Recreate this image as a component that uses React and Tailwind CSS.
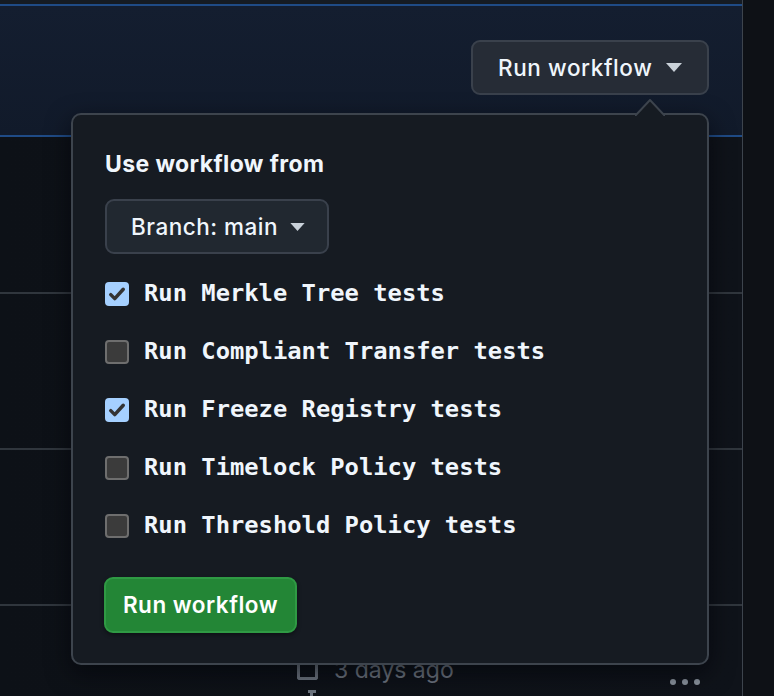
import React from 'react';

const tests = [
  { label: 'Run Merkle Tree tests', checked: true },
  { label: 'Run Compliant Transfer tests', checked: false },
  { label: 'Run Freeze Registry tests', checked: true },
  { label: 'Run Timelock Policy tests', checked: false },
  { label: 'Run Threshold Policy tests', checked: false },
];

const Caret = ({ className }) => (
  <svg viewBox="0 0 16 9" className={className} fill="currentColor">
    <path d="M0 0h16L8 9z" />
  </svg>
);

function Checkbox({ checked }) {
  if (checked) {
    return (
      <span className="w-[24px] h-[24px] rounded-[4px] bg-[#a5d0ff] flex items-center justify-center shrink-0">
        <svg viewBox="0 0 16 16" className="w-[20px] h-[20px]" fill="none" stroke="#333333" strokeWidth="2.8" strokeLinecap="round" strokeLinejoin="round">
          <path d="M3 8.5l3.2 3.2L13 4.2" />
        </svg>
      </span>
    );
  }
  return <span className="w-[24px] h-[24px] rounded-[4px] bg-[#3b3b3b] border-2 border-[#6e6e6e] shrink-0" />;
}

export default function App() {
  return (
    <div className="relative w-[774px] h-[696px] overflow-hidden bg-[#0d1117] flex font-['Inter',sans-serif]">
      {/* main column */}
      <div className="w-[743px] border-r border-[#3d444d] flex flex-col shrink-0">
        <div className="h-[4px] shrink-0 bg-[#151b23]" />
        <div className="h-[133px] shrink-0 border-y-2 border-[#1f4b86] bg-gradient-to-b from-[#141e30] to-[#111a2a] flex justify-end items-start pt-[34px] pr-[33px]">
          <button className="h-[55px] w-[238px] rounded-[9px] bg-[#262c36] border-2 border-[#3a414c] flex items-center pl-[25px] gap-[14px] text-[#f0f6fc] text-[22.5px] font-medium tracking-[0.6px]">
            Run workflow
            <Caret className="w-[16px] h-[9px] text-[#c9d1d9]" />
          </button>
        </div>
        <div className="h-[157px] shrink-0 border-b-2 border-[#30363d] bg-gradient-to-r from-[#0d1117] to-[#0f131a]" />
        <div className="h-[156px] shrink-0 border-b-2 border-[#30363d] bg-gradient-to-r from-[#0d1117] to-[#0f131a]" />
        <div className="h-[156px] shrink-0 border-b-2 border-[#30363d] bg-gradient-to-r from-[#0d1117] to-[#0f131a]" />
        <div className="flex-1 min-h-0 overflow-hidden flex items-start pt-[50px] pl-[297px] pr-[42px] bg-gradient-to-r from-[#0d1117] to-[#0f131a]">
          <div className="flex flex-col items-start">
            <div className="flex items-center gap-[16px] text-[#6e7681] text-[23px] leading-[28px]">
              <span className="w-[21px] h-[20px] border-[3px] border-t-0 border-[#6e7681] rounded-b-[3px]" />
              3 days ago
            </div>
            <span className="ml-[11px] mt-[6px] w-[8px] h-[3px] bg-[#6e7681]" />
            <span className="ml-[13px] w-[3px] h-[10px] bg-[#6e7681]" />
          </div>
          <div className="ml-auto mt-[23px] flex gap-[6px]">
            <span className="w-[6px] h-[6px] rounded-full bg-[#8b949e]" />
            <span className="w-[6px] h-[6px] rounded-full bg-[#8b949e]" />
            <span className="w-[6px] h-[6px] rounded-full bg-[#8b949e]" />
          </div>
        </div>
      </div>
      <div className="flex-1 bg-[#0e1116]" />

      {/* popover */}
      <div className="absolute left-[71px] top-[113px] w-[638px] h-[552px] rounded-[10px] border-2 border-[#3d444d] bg-[#161b22] shadow-[0_8px_24px_rgba(1,4,9,0.6)] pl-[32px] pt-[35px]">
        <svg viewBox="0 0 30 17" className="absolute right-[42px] top-[-16px] w-[30px] h-[17px]">
          <path d="M0 17L15 1 30 17" fill="#161b22" stroke="#3d444d" strokeWidth="2" />
        </svg>
        <div className="text-[#f0f6fc] text-[23px] font-bold leading-[28px] tracking-[0.4px]">Use workflow from</div>
        <button className="mt-[21px] h-[55px] w-[224px] rounded-[9px] bg-[#212830] border-2 border-[#3a414c] flex items-center pl-[24px] gap-[12px] text-[#f0f6fc] text-[22.5px] font-medium tracking-[0.5px]">
          Branch: main
          <Caret className="w-[15px] h-[8px] text-[#c9d1d9]" />
        </button>
        <div className="mt-[28px] flex flex-col gap-[34px]">
          {tests.map((t) => (
            <label key={t.label} className="flex items-center gap-[15px] h-[24px]">
              <Checkbox checked={t.checked} />
              <span className="font-['DejaVu_Sans_Mono',monospace] font-bold text-[23.8px] text-[#f0f6fc] whitespace-pre">{t.label}</span>
            </label>
          ))}
        </div>
        <button className="-ml-[1px] mt-[39px] h-[56px] w-[193px] rounded-[9px] bg-[#238636] border-2 border-[#2f9a44] shadow-[0_2px_4px_rgba(0,0,0,0.4)] text-white text-[22.5px] font-semibold tracking-[0.5px] flex items-center justify-center">
          Run workflow
        </button>
      </div>
    </div>
  );
}
